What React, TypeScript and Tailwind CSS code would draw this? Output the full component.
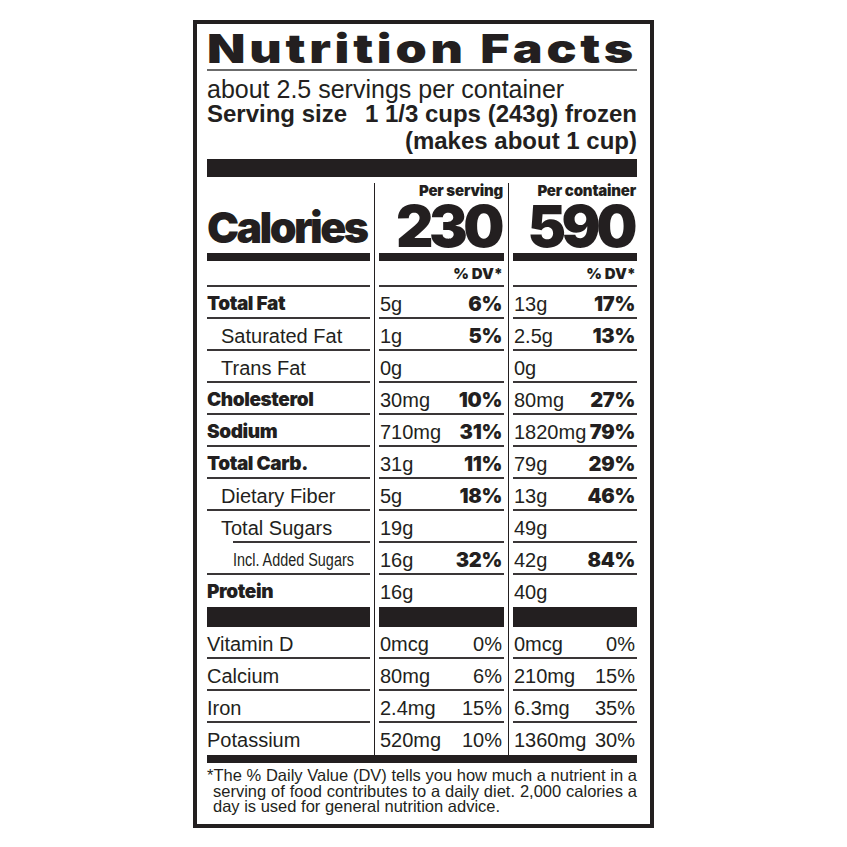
import React from 'react';

const heavy = "font-['Inter','Liberation_Sans',sans-serif] font-black";
const plain = "font-['Liberation_Sans',Arial,sans-serif]";

type Kind = 'bold' | 'sub' | 'added';

type Nutrient = {
  label: string;
  kind: Kind;
  serving: string;
  servingDv?: string;
  container: string;
  containerDv?: string;
  line: 'full' | 'indent' | 'none';
};

const nutrients: Nutrient[] = [
  {label: 'Total Fat', kind: 'bold', serving: '5g', servingDv: '6%', container: '13g', containerDv: '17%', line: 'full'},
  {label: 'Saturated Fat', kind: 'sub', serving: '1g', servingDv: '5%', container: '2.5g', containerDv: '13%', line: 'full'},
  {label: 'Trans Fat', kind: 'sub', serving: '0g', container: '0g', line: 'full'},
  {label: 'Cholesterol', kind: 'bold', serving: '30mg', servingDv: '10%', container: '80mg', containerDv: '27%', line: 'full'},
  {label: 'Sodium', kind: 'bold', serving: '710mg', servingDv: '31%', container: '1820mg', containerDv: '79%', line: 'full'},
  {label: 'Total Carb.', kind: 'bold', serving: '31g', servingDv: '11%', container: '79g', containerDv: '29%', line: 'full'},
  {label: 'Dietary Fiber', kind: 'sub', serving: '5g', servingDv: '18%', container: '13g', containerDv: '46%', line: 'full'},
  {label: 'Total Sugars', kind: 'sub', serving: '19g', container: '49g', line: 'indent'},
  {label: 'Incl. Added Sugars', kind: 'added', serving: '16g', servingDv: '32%', container: '42g', containerDv: '84%', line: 'full'},
  {label: 'Protein', kind: 'bold', serving: '16g', container: '40g', line: 'none'}
];

const vitamins = [
  ['Vitamin D', '0mcg', '0%', '0mcg', '0%'],
  ['Calcium', '80mg', '6%', '210mg', '15%'],
  ['Iron', '2.4mg', '15%', '6.3mg', '35%'],
  ['Potassium', '520mg', '10%', '1360mg', '30%']
];

function Sep() {
  return (
    <div className="flex w-[9px] shrink-0 justify-center">
      <div className="w-px bg-[#231f20]" />
    </div>
  );
}

function Cell({width, line, indent, children}: {width: string; line: boolean; indent?: boolean; children: React.ReactNode}) {
  return (
    <div className={`flex ${width} shrink-0 flex-col`}>
      <div className="flex flex-1 items-center pt-[3px]">{children}</div>
      <div className={`h-[2px] ${line ? 'bg-[#3a3637]' : ''} ${indent ? 'ml-[26px]' : ''}`} />
    </div>
  );
}

function Amount({value, dv, bold}: {value: string; dv?: string; bold: boolean}) {
  return (
    <>
      <span className={`${plain} pl-px text-[20px] leading-[24px]`}>{value}</span>
      <span className={`ml-auto pr-[2px] text-[20px] leading-[24px] ${bold ? `${heavy} tracking-[-0.3px]` : plain}`}>{dv}</span>
    </>
  );
}

function NutrientRow({item}: {item: Nutrient}) {
  const line = item.line !== 'none';
  let label: React.ReactNode;
  if (item.kind === 'bold') {
    label = <span className={`${heavy} text-[19px] leading-[24px] tracking-[-0.4px]`}>{item.label}</span>;
  } else if (item.kind === 'sub') {
    label = <span className={`${plain} pl-[14px] text-[20px] leading-[24px]`}>{item.label}</span>;
  } else {
    label = (
      <span className="flex pl-[26px]">
        <span className={`${plain} inline-block origin-left scale-x-[0.8] whitespace-nowrap text-[18px] leading-[24px]`}>{item.label}</span>
      </span>
    );
  }
  return (
    <div className="flex h-[32px]">
      <Cell width="w-[163px]" line={line} indent={item.line === 'indent'}>
        {label}
      </Cell>
      <Sep />
      <Cell width="w-[125px]" line={line}>
        <Amount value={item.serving} dv={item.servingDv} bold />
      </Cell>
      <Sep />
      <Cell width="w-[124px]" line={line}>
        <Amount value={item.container} dv={item.containerDv} bold />
      </Cell>
    </div>
  );
}

function VitaminRow({row, last}: {row: string[]; last: boolean}) {
  return (
    <div className="flex h-[32px]">
      <Cell width="w-[163px]" line={!last}>
        <span className={`${plain} text-[20px] leading-[24px]`}>{row[0]}</span>
      </Cell>
      <Sep />
      <Cell width="w-[125px]" line={!last}>
        <Amount value={row[1]} dv={row[2]} bold={false} />
      </Cell>
      <Sep />
      <Cell width="w-[124px]" line={!last}>
        <Amount value={row[3]} dv={row[4]} bold={false} />
      </Cell>
    </div>
  );
}

function BarRow({height}: {height: string}) {
  return (
    <div className={`flex ${height}`}>
      <div className="w-[163px] shrink-0 bg-[#231f20]" />
      <Sep />
      <div className="w-[125px] shrink-0 bg-[#231f20]" />
      <Sep />
      <div className="w-[124px] shrink-0 bg-[#231f20]" />
    </div>
  );
}

function PerColumn({heading, calories, width}: {heading: string; calories: string; width: string}) {
  return (
    <div className={`flex ${width} shrink-0 flex-col items-end`}>
      <span className={`${heavy} pr-[1px] text-[15px] leading-[16px] tracking-[-0.2px]`}>{heading}</span>
      <span className={`${heavy} pr-[4px] text-[58px] leading-[54px] tracking-[-4.5px]`}>{calories}</span>
    </div>
  );
}

function DvHeader({width}: {width: string}) {
  return (
    <div className={`flex ${width} shrink-0 flex-col`}>
      <span className={`${heavy} flex-1 pr-px pt-[5px] text-right text-[15px] leading-[16px]`}>% DV*</span>
      <div className="h-[2px] bg-[#3a3637]" />
    </div>
  );
}

export default function App() {
  return (
    <div className="flex h-[847px] w-full justify-center bg-white pt-[20px] text-[#231f20]">
      <div className="flex h-[808px] w-[461px] flex-col border-4 border-[#231f20] pl-[10px] pr-[13px]">
        <h1 className="flex h-[45px] pt-[5px]">
          <span className={`${heavy} inline-block origin-left scale-x-[1.25] whitespace-nowrap text-[40px] leading-[40px] tracking-[3px]`}>Nutrition Facts</span>
        </h1>
        <div className="h-[2px] bg-[#6b6b6b]" />

        <p className={`${plain} mt-[8px] text-[25px] leading-[21px]`}>about 2.5 servings per container</p>
        <div className={`${plain} text-[24px] font-bold leading-[27px]`}>
          <div className="flex justify-between">
            <span>Serving size</span>
            <span>1 1/3 cups (243g) frozen</span>
          </div>
          <div className="text-right">(makes about 1 cup)</div>
        </div>

        <div className="mt-[5px] h-[18px] bg-[#231f20]" />

        <div className="h-[6px]" />
        <div className="flex h-[70px]">
          <div className="flex w-[163px] shrink-0 items-end pb-[4px]">
            <span className={`${heavy} text-[43px] leading-[43px] tracking-[-2.6px]`}>Calories</span>
          </div>
          <Sep />
          <PerColumn heading="Per serving" calories="230" width="w-[125px]" />
          <Sep />
          <PerColumn heading="Per container" calories="590" width="w-[124px]" />
        </div>
        <BarRow height="h-[8px]" />
        <div className="flex h-[26px]">
          <div className="flex w-[163px] shrink-0 flex-col justify-end">
            <div className="h-[2px] bg-[#3a3637]" />
          </div>
          <Sep />
          <DvHeader width="w-[125px]" />
          <Sep />
          <DvHeader width="w-[124px]" />
        </div>

        {nutrients.map((item) => (
          <NutrientRow key={item.label} item={item} />
        ))}

        <BarRow height="h-[20px]" />

        {vitamins.map((row, i) => (
          <VitaminRow key={row[0]} row={row} last={i === vitamins.length - 1} />
        ))}

        <div className="h-[8px] bg-[#231f20]" />

        <div className={`${plain} pt-[5px] text-[16.5px] leading-[15.5px]`}>
          <div className="text-justify [text-align-last:justify]">*The % Daily Value (DV) tells you how much a nutrient in a</div>
          <div className="pl-[6px] text-justify [text-align-last:justify]">serving of food contributes to a daily diet. 2,000 calories a</div>
          <div className="pl-[6px]">day is used for general nutrition advice.</div>
        </div>
      </div>
    </div>
  );
}
